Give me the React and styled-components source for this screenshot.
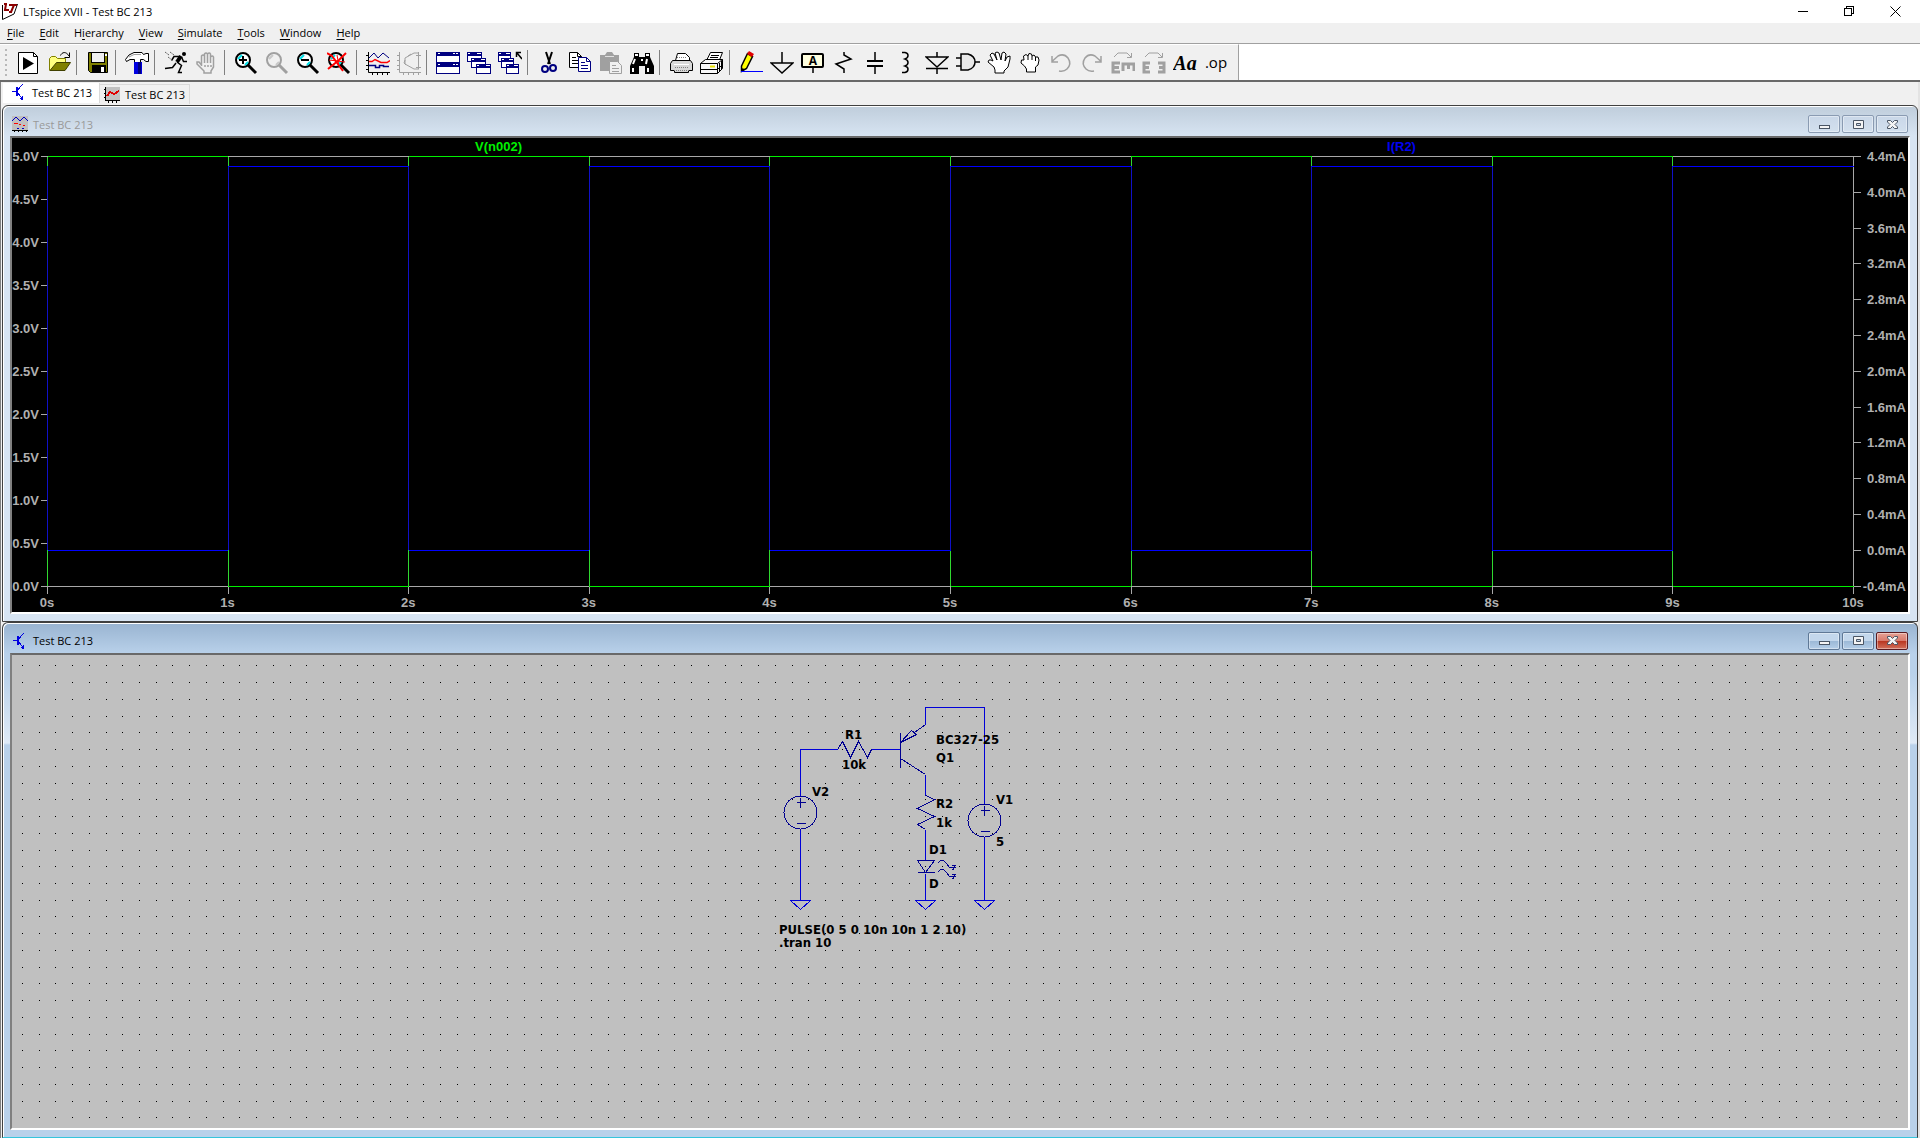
import React, { useState } from "react";
import styled, { createGlobalStyle, css } from "styled-components";

const GlobalStyle = createGlobalStyle`
  * {
    box-sizing: border-box;
  }
  body {
    margin: 0;
    background: #f0f0f0;
    color: #000;
    font-family: "Open Sans", "Noto Sans", sans-serif;
    font-size: 11px;
  }
  button {
    margin: 0;
    padding: 0;
    border: 0;
    background: none;
    color: inherit;
    font: inherit;
  }
`;

const NAVY = "#000080";
const GREY = "#a0a0a0";

const menus = ["File", "Edit", "Hierarchy", "View", "Simulate", "Tools", "Window", "Help"];
const menuKeys = { Hierarchy: 1 };

const Magnifier = ({ color = "#000", glass = "#fff", shine = "#00e0e8", children }) => (
  <>
    <path d="M14 14L22 22" stroke={color} strokeWidth="3" />
    <circle cx="9" cy="9" r="7" fill={glass} stroke={color} strokeWidth="2" />
    <path d="M4 8L8 4M11 14L14 11" stroke={shine} strokeWidth="2" />
    {children}
  </>
);

const MiniWindow = ({ x, y, w = 14, h = 9 }) => (
  <g>
    <rect x={x} y={y} width={w} height={h} fill={NAVY} />
    <rect x={x + 1} y={y + 4} width={w - 2} height={h - 5} fill="#fff" />
    <rect x={x + w - 5} y={y + 1} width="4" height="1" fill="#fff" />
    <rect x={x + 1} y={y + 1} width="2" height="1" fill="#fff" />
  </g>
);

const icons = {
  run: (
    <>
      <path d="M2.5 1.5H17.5L21.5 5.5V22.5H2.5Z" fill="#fff" stroke="#000" />
      <path d="M17.5 1.5V5.5H21.5" fill="none" stroke="#000" />
      <path d="M7 6L18 12.5L7 19Z" />
    </>
  ),
  open: (
    <>
      <path d="M2.5 19.5V7.5L4.5 5.5H8.5L10.5 7.5H18.5V12" fill="#ffff80" stroke="#808000" />
      <path d="M3 19.5L9.5 11.5H23.5L18 19.5Z" fill="#808000" stroke="#404000" />
      <path d="M13.5 4.5C15 1 19 0 22 5M22.5 1.5V6.5H17.5" fill="none" stroke="#000" />
    </>
  ),
  save: (
    <>
      <path d="M2.5 1.5H21.5V21.5H4.5L2.5 19.5Z" fill="#808000" stroke="#000" />
      <rect x="5.5" y="1.5" width="13" height="10" fill="#f0f0f0" stroke="#000" />
      <rect x="19" y="3" width="2" height="2" fill="#fff" />
      <rect x="6" y="14" width="14" height="8" />
      <rect x="15" y="16" width="3" height="5" fill="#fff" />
    </>
  ),
  hammer: (
    <>
      <path
        d="M9.5 11.5V8.5H5L1.5 10.5L0.5 8.5L4 4L9 1.5H17L18.5 3.5L21 2.5H23.5V10.5H21L18.5 8.5H15.5V11.5Z"
        fill="#fff"
        stroke="#000"
      />
      <path d="M4 6L9 3.5H16" fill="none" stroke={GREY} />
      <rect x="9" y="11" width="8" height="12" fill="#0000e0" />
      <rect x="13" y="11" width="3" height="12" fill={NAVY} />
    </>
  ),
  runner: (
    <g fill="none" stroke="#000">
      <circle cx="20" cy="3" r="2" fill="#000" stroke="none" />
      <path d="M17 5L13 11" strokeWidth="4" />
      <path d="M17.5 6L19.5 10.5H23M15 5.5H10L7.5 9.5M13 11L17.5 14.5L14.5 21.5H18M12 12L8.5 16.5L1 17.5" strokeWidth="1.5" />
      <path d="M1 1L5 4M6 1L10 4M4 6L8 9" stroke="#606060" strokeDasharray="2 1" />
    </g>
  ),
  halt: (
    <g fill="none" stroke={GREY} strokeWidth="1.5">
      <path d="M6.5 15V5Q8 3 9.5 5V12V3Q11 1 12.5 3V12V3Q14.5 1 15.5 3V12V6Q17.5 4 18.5 6V16L16 20V22H9V20L6 17L2 13V11H4L6.5 14" />
      <path d="M10 14V16M13 14V16M16 14V16" />
    </g>
  ),
  zoomIn: (
    <Magnifier>
      <path d="M9 5V13M5 9H13" stroke="#000" strokeWidth="2" />
    </Magnifier>
  ),
  zoomPan: <Magnifier color={GREY} glass="#f0f0f0" shine="#c8c8c8" />,
  zoomOut: (
    <Magnifier>
      <path d="M5 9H13" stroke="#000" strokeWidth="2" />
    </Magnifier>
  ),
  zoomFit: (
    <Magnifier>
      <path d="M0 2L5 5L16 20M19 2L12 9L1 18" fill="none" stroke="#f00" strokeWidth="2" />
      <path d="M2 9L18 11M10 4L12 15" stroke="#f00" />
    </Magnifier>
  ),
  plot: (
    <g fill="none" stroke="#000">
      <path d="M2.5 1V21.5H24M0 4.5H2M0 9.5H2M0 14.5H2M0 18.5H2M6.5 21V24M11.5 21V24M16.5 21V24M21.5 21V24" />
      <path d="M3 7L8 2L12 7L17 2L23 7" stroke={NAVY} />
      <path d="M3 10.5H6L9 8.5L15 11.5H21L24 9.5" stroke="#f00" strokeWidth="1.5" />
      <path d="M3 14.5H9.5V16.5H13.5V14.5H17.5V15.5H23" stroke={NAVY} strokeWidth="1.5" />
    </g>
  ),
  polar: (
    <g fill="none" stroke={GREY}>
      <path d="M2.5 1V21.5H24M0 4.5H2M0 9.5H2M0 14.5H2M0 18.5H2M6.5 21V24M11.5 21V24M16.5 21V24M21.5 21V24" />
      <path d="M21.5 1V18M19 4.5H24M19 16.5H24M22 2H17L8 7V13L17 18H22M14 3L11 5M8 9L7 12L9 14" />
    </g>
  ),
  tile: (
    <>
      <rect y="1" width="24" height="22" fill={NAVY} />
      <rect x="1" y="5" width="22" height="6" fill="#fff" />
      <rect x="1" y="16" width="22" height="6" fill="#fff" />
      <path d="M2 2.5H4M17 2.5H19M20 2.5H22M2 13.5H4M17 13.5H19M20 13.5H22" stroke="#fff" />
    </>
  ),
  cascade: (
    <>
      <MiniWindow x={0} y={1} w={15} h={10} />
      <MiniWindow x={4} y={7} w={15} h={10} />
      <MiniWindow x={9} y={13} w={15} h={10} />
    </>
  ),
  closeAll: (
    <>
      <MiniWindow x={0} y={1} w={13} h={10} />
      <MiniWindow x={3} y={7} w={13} h={10} />
      <MiniWindow x={8} y={13} w={13} h={10} />
      <path d="M18.5 6V1.5H23M19 2L24 8" fill="none" stroke="#000" strokeWidth="1.5" />
    </>
  ),
  cut: (
    <g fill="none">
      <path d="M9 1L13 13M15 1L11 13" stroke="#000" strokeWidth="2" />
      <circle cx="8" cy="18" r="3" stroke={NAVY} strokeWidth="2" />
      <circle cx="16" cy="17" r="3" stroke={NAVY} strokeWidth="2" />
    </g>
  ),
  copy: (
    <>
      <path d="M1.5 1.5H9.5L13.5 5.5V16.5H1.5Z" fill="#fff" stroke="#000" />
      <path d="M9.5 1.5V5.5H13.5M4 6.5H8M4 9.5H10M4 12.5H10" fill="none" stroke="#000" />
      <path d="M10.5 6.5H18.5L22.5 10.5V20.5H10.5Z" fill="#fff" stroke={NAVY} />
      <path d="M18.5 6.5V10.5H22.5M13 11.5H17M13 14.5H20M13 17.5H20" fill="none" stroke={NAVY} />
    </>
  ),
  paste: (
    <>
      <path d="M1 4H6L8 1H13L15 4H20V20H1Z" fill={GREY} />
      <path d="M6 5.5H15" stroke="#e0e0e0" />
      <path d="M10.5 10.5H18.5L22.5 14.5V22.5H10.5Z" fill="#f0f0f0" stroke={GREY} />
      <path d="M13 14.5H17M13 17.5H20M13 20.5H20" stroke={GREY} />
    </>
  ),
  find: (
    <>
      <path d="M4 2H9V6H15V2H20V6L24 15V23H15V15H9V23H0V15L4 6Z" />
      <path d="M5 4H8M16 4H19M5 8L3 13M17 8L16 13M3 17V21M18 17V21M12 8V10" stroke="#fff" strokeWidth="2" fill="none" />
    </>
  ),
  setup: (
    <>
      <path d="M6.5 9.5L8.5 2.5H16.5L20.5 6.5V9.5" fill="#fff" stroke="#000" />
      <path d="M3.5 9.5H21.5L23.5 12.5V19.5H19.5V21.5H5.5V19.5H1.5V12.5Z" fill="#d8d8d8" stroke="#000" />
      <path d="M8 6.5H17M6 16.5H20M5 19.5H20" stroke="#808080" strokeDasharray="1 1" />
      <path d="M5 13.5H20" stroke="#fff" />
    </>
  ),
  print: (
    <>
      <path d="M5.5 11.5L10.5 1.5H22.5L18.5 11.5" fill="#fff" stroke="#000" />
      <path d="M11 4.5H19M10 6.5H18M9 9.5H17" stroke="#000" />
      <path d="M0.5 12.5L5.5 8.5H22.5V17.5L17.5 22.5H0.5Z" fill="#f8f8f8" stroke="#000" />
      <path d="M0.5 12.5H17.5V22.5M17.5 12.5L22.5 8.5M0.5 18.5H17.5L22.5 13.5M19.5 12V20M21.5 10V18" fill="none" stroke="#000" />
      <path d="M10 15.5H15" stroke="#e8e000" strokeWidth="2" />
    </>
  ),
  wire: (
    <>
      <path d="M2.5 15L8.5 2.5L13.5 5.5L7.5 17.5L2.5 20.5Z" fill="#ff0" stroke="#000" strokeWidth="1.5" />
      <path d="M8 3L10 0L15 3L13 6Z" fill="#e00000" />
      <path d="M2 17L6 18L2 21Z" />
      <path d="M2 20.5H24" stroke="#00f" />
    </>
  ),
  ground: (
    <path d="M12 1V12M1 12H23L12 22Z" fill="none" stroke="#000" strokeWidth="1.5" />
  ),
  label: (
    <>
      <rect x="1" y="3" width="21" height="13" rx="1" fill="#ffffe0" stroke="#000" strokeWidth="2" />
      <text x="12" y="14" fontSize="12" fontWeight="bold" textAnchor="middle">A</text>
      <path d="M12 17V22" stroke="#000" strokeWidth="1.5" />
    </>
  ),
  resistor: <path d="M12 1V4L19 8L4 13L12 18V22" fill="none" stroke="#000" strokeWidth="1.5" />,
  capacitor: (
    <>
      <path d="M12 1V9M12 16V23" stroke="#000" strokeWidth="1.5" />
      <path d="M4 10H20M4 15H20" stroke="#000" strokeWidth="2" />
    </>
  ),
  inductor: (
    <path d="M8 1.5H11Q14 2 14 4.5Q14 7 11 8Q14 9 14 11.5Q14 14 11 15Q14 16 14 18Q14 21 11 21.5H8" fill="none" stroke="#000" strokeWidth="1.5" />
  ),
  diode: (
    <g fill="none" stroke="#000" strokeWidth="1.5">
      <path d="M12 1V6M12 17V23M1 17.5H23" />
      <path d="M1 6H23L12 16Z" />
    </g>
  ),
  gate: (
    <g fill="none" stroke="#000" strokeWidth="1.5">
      <path d="M5 3H12Q19 5 19 11Q19 17 12 19H5Z" fill="#e8e8e8" />
      <path d="M0 7H5M0 15H5M19 11H24" />
    </g>
  ),
  move: (
    <path
      d="M7 16L1 11L2 9H4L6 10L3 4L5 2L7 3L10 9L8 2L10 1L12 2L14 9L15 2L17 1L19 3L18 10L20 6L23 5V8L21 16L17 20V22H8V19Z"
      fill="#fff"
      stroke="#000"
    />
  ),
  drag: (
    <path
      d="M6.5 15L3 12L3.5 9H6L5.5 5L8 3.5L10 5L11 2.5L13.5 3L14 5L16 4L17.5 6L20 6L21 9L20 14L17.5 16V21H8.5V18Z M10 5V9M14 5V9M17.5 6V10"
      fill="#fff"
      stroke="#000"
    />
  ),
  undo: (
    <path d="M3 5V11H9M3.5 10L9 5Q15 2 19 7Q23 13 18 18Q15 21 10 20" fill="none" stroke={GREY} strokeWidth="1.5" />
  ),
  redo: (
    <path d="M21 5V11H15M20.5 10L15 5Q9 2 5 7Q1 13 6 18Q9 21 14 20" fill="none" stroke={GREY} strokeWidth="1.5" />
  ),
  rotate: (
    <g fill="none" stroke={GREY}>
      <path d="M3 6L7 2H16L20 6M20.5 2V6.5H16" />
      <path d="M9 12H2V21H9M3 16.5H8M12 20V13H23V20M17.5 13V18" strokeWidth="3" />
    </g>
  ),
  mirror: (
    <g fill="none" stroke={GREY}>
      <path d="M3 6L7 2H16L20 6M20.5 2V6.5H16" />
      <path d="M8 12H2V21H8M2 16.5H7M16 12H22V21H16M17 16.5H22" strokeWidth="3" />
    </g>
  ),
  text: (
    <text x="12" y="19" fontFamily="Liberation Serif, serif" fontSize="20" fontWeight="bold" fontStyle="italic" textAnchor="middle">
      Aa
    </text>
  ),
  directive: (
    <text x="12" y="17" fontSize="15" fontWeight="500" textAnchor="middle">
      .op
    </text>
  ),
};

const toolGroups = [
  ["run", "open"],
  ["save"],
  ["hammer"],
  ["runner", "halt"],
  ["zoomIn", "zoomPan", "zoomOut", "zoomFit"],
  ["plot", "polar"],
  ["tile", "cascade", "closeAll"],
  ["cut", "copy", "paste", "find"],
  ["setup", "print"],
  [
    "wire", "ground", "label", "resistor", "capacitor", "inductor", "diode", "gate",
    "move", "drag", "undo", "redo", "rotate", "mirror", "text", "directive",
  ],
];

const disabledTools = ["halt", "zoomPan", "polar", "paste", "undo", "redo", "rotate", "mirror"];

function AppLogo() {
  return (
    <svg width="16" height="17" viewBox="0 0 16 17" aria-hidden="true">
      <path d="M0.5 2V16.5L12 11L15.5 1" fill="#fff" stroke="#000" />
      <path d="M4 1L3 7H7M5 1H2M7 2H15M12 2L9 9M7 9H10" fill="none" stroke="#8b0000" strokeWidth="2" />
    </svg>
  );
}

function SchematicIcon() {
  return (
    <svg width="16" height="16" viewBox="0 0 16 16" shapeRendering="crispEdges" aria-hidden="true">
      <g fill="none" stroke="#0000e0">
        <path d="M1 7.5H6" />
        <path d="M6 3V12" strokeWidth="2" />
        <path d="M6.5 6L12 0M6.5 9L12 15" />
      </g>
      <path d="M12 16V12L8 15Z" fill="#0000e0" />
    </svg>
  );
}

function TraceIcon() {
  return (
    <svg width="16" height="16" viewBox="0 0 16 16" shapeRendering="crispEdges" aria-hidden="true">
      <rect x="1" width="15" height="14" fill="#c0c0c0" />
      <path d="M1.5 0V13.5H16M0 2.5H1M0 6.5H1M0 10.5H1M4.5 14V16M8.5 14V16M12.5 14V16" stroke="#000" fill="none" />
      <path d="M3 9L6 5L10 7L15 4" fill="none" stroke="#e00000" strokeWidth="2" />
    </svg>
  );
}

function PlotIcon() {
  return (
    <svg width="16" height="16" viewBox="0 0 16 16" shapeRendering="crispEdges" aria-hidden="true">
      <rect width="16" height="14" fill="#c0c0c0" />
      <path d="M0 5L4 1L8 5L12 1L16 5" fill="none" stroke="#0000c0" />
      <path d="M2 7.5H6M7 8.5H9M11 9.5H13" stroke="#f00" />
      <path d="M5 12.5H7M10 12.5H12" stroke="#0000c0" />
      <path d="M0 14.5H16M2.5 15V16M6.5 15V16M10.5 15V16M14.5 15V16" stroke="#000" />
    </svg>
  );
}

const captionIcons = {
  minimize: <rect x="1.5" y="7.5" width="10" height="3" />,
  maximize: <path d="M1.5 2.5H11.5V10.5H1.5ZM4.5 5.5H8.5V7.5H4.5Z" fillRule="evenodd" />,
  close: <path d="M1.5 2.5H4.5L6.5 4.5L8.5 2.5H11.5V4L9 6.5L11.5 9V10.5H8.5L6.5 8.5L4.5 10.5H1.5V9L4 6.5L1.5 4Z" />,
};

function ChildWindow({ title, icon, active, children }) {
  return (
    <Frame $active={active}>
      <FrameTitle $active={active}>
        {icon}
        <span>{title}</span>
        <CaptionButtons>
          {Object.keys(captionIcons).map((name) => (
            <CaptionButton
              key={name}
              type="button"
              aria-label={name}
              $active={active}
              $danger={active && name === "close"}
            >
              <svg width="13" height="13" viewBox="0 0 13 13" aria-hidden="true">
                <g fill="#f4f4f4" stroke="#4a5564">{captionIcons[name]}</g>
              </svg>
            </CaptionButton>
          ))}
        </CaptionButtons>
      </FrameTitle>
      <Client>{children}</Client>
    </Frame>
  );
}

const seconds = Array.from({ length: 11 }, (_, i) => i);
const volts = Array.from({ length: 11 }, (_, i) => 5 - i * 0.5);
const currents = Array.from({ length: 13 }, (_, i) => 4.4 - i * 0.4);

const timeX = (s) => `${s * 10}%`;
const voltY = (v) => `${((5 - v) / 5) * 100}%`;
const ampY = (a) => `${((4.4 - a) / 4.8) * 100}%`;

const I_ON = 4.29;

function Waveform() {
  return (
    <PlotArea>
      <PlotSvg role="img" aria-label="V(n002) and I(R2) over time">
        <g transform="translate(0.5 0.5)" shapeRendering="crispEdges">
          <g stroke="#a8a8a8">
            <line x1="0" y1="0" x2="100%" y2="0" />
            <line x1="0" y1="100%" x2="100%" y2="100%" />
            <line x1="0" y1="0" x2="0" y2="100%" />
            <line x1="100%" y1="0" x2="100%" y2="100%" />
            {volts.map((v) => (
              <line key={v} x1="-7" x2="0" y1={voltY(v)} y2={voltY(v)} />
            ))}
          </g>
          {seconds.slice(0, 10).map((s) => {
            const on = s % 2 === 0;
            return (
              <g key={s}>
                <line x1={timeX(s)} x2={timeX(s)} y1="0" y2="100%" stroke="#30d830" />
                <line
                  x1={timeX(s)}
                  x2={timeX(s + 1)}
                  y1={voltY(on ? 5 : 0)}
                  y2={voltY(on ? 5 : 0)}
                  stroke="#00f000"
                />
              </g>
            );
          })}
          {seconds.slice(0, 10).map((s) => {
            const level = ampY(s % 2 === 0 ? 0 : I_ON);
            return (
              <g key={s}>
                <line x1={timeX(s)} x2={timeX(s)} y1={ampY(I_ON)} y2={ampY(0)} stroke="#1010c8" />
                <line x1={timeX(s)} x2={timeX(s + 1)} y1={level} y2={level} stroke="#0000ff" />
              </g>
            );
          })}
        </g>
        {/* ticks that hang off the right and bottom axes */}
        {currents.map((a) => (
          <svg key={a} x="100%" y={ampY(a)} overflow="visible">
            <path d="M1 0.5H8" stroke="#a8a8a8" shapeRendering="crispEdges" />
            <AxisText x="53" y="5" textAnchor="end">{`${a.toFixed(1)}mA`.replace("-0.0", "0.0")}</AxisText>
          </svg>
        ))}
        {seconds.map((s) => (
          <svg key={s} x={timeX(s)} y="100%" overflow="visible">
            <path d="M0.5 1V8" stroke="#a8a8a8" shapeRendering="crispEdges" />
            <AxisText x="0" y="21" textAnchor="middle">{s}s</AxisText>
          </svg>
        ))}
        {volts.map((v) => (
          <svg key={v} x="0" y={voltY(v)} overflow="visible">
            <AxisText x="-8" y="5" textAnchor="end">{v.toFixed(1)}V</AxisText>
          </svg>
        ))}
        <AxisText x="25%" y="-5" textAnchor="middle" $color="#00f000">V(n002)</AxisText>
        <AxisText x="75%" y="-5" textAnchor="middle" $color="#0000f0">I(R2)</AxisText>
      </PlotSvg>
    </PlotArea>
  );
}

// the grid pitch is not a whole number of pixels, 15 dots fill a 251px tile
const gridSteps = Array.from({ length: 15 }, (_, k) => k * 16.73);

const parts = [
  [833, 84, "R1"],
  [830, 114, "10k"],
  [924, 89, "BC327-25"],
  [924, 107, "Q1"],
  [800, 141, "V2"],
  [924, 153, "R2"],
  [924, 172, "1k"],
  [984, 149, "V1"],
  [984, 191, "5"],
  [917, 199, "D1"],
  [917, 233, "D"],
  [767, 279, "PULSE(0 5 0 10n 10n 1 2 10)"],
  [767, 292, ".tran 10"],
];

const Source = ({ x, y }) => (
  <>
    <circle cx={x} cy={y} r="16.5" />
    <path d={`M${x - 4} ${y - 10}H${x + 5}M${x} ${y - 15}V${y - 5}M${x - 4} ${y + 11}H${x + 5}`} />
  </>
);

const Ground = ({ x, y }) => <path d={`M${x - 10} ${y}H${x + 10}L${x} ${y + 9}Z`} />;

function Schematic() {
  return (
    <Canvas>
      <SchematicSvg role="img" aria-label="Transistor switch schematic">
        <defs>
          <pattern id="grid" x="10" y="10" width="251" height="251" patternUnits="userSpaceOnUse">
            {gridSteps.map((gx) =>
              gridSteps.map((gy) => (
                <rect key={`${gx}-${gy}`} x={Math.floor(gx + 0.4)} y={Math.ceil(gy)} width="1" height="1" />
              ))
            )}
          </pattern>
        </defs>
        <rect width="100%" height="100%" fill="url(#grid)" />
        <g transform="translate(0.5 0.5)" fill="none" shapeRendering="crispEdges">
          <g stroke="#0000d8">
            <path d="M788 140V94H825M859 94H888" />
            <path d="M788 174V245M972 182V245M913 218V245" />
            <path d="M913 69V52H972V148" />
            <path d="M913 119V140M913 174V205" />
            <Ground x={788} y={245} />
            <Ground x={913} y={245} />
            <Ground x={972} y={245} />
          </g>
          <g stroke="#000090">
            <path d="M825 94L830 86L838 102L846 86L855 102L859 94" />
            <path d="M888 77V112M913 69L902 77M888 87L899 75L904 79L888 87M888 103L913 119" />
            <path d="M913 140L922 144L905 153L922 161L905 169L913 174" />
            <path d="M905 205H922L913 217ZM905 217H922" />
            <path d="M925 208L928 205H931L934 208L937 212H943M939 210H943L940 215" />
            <path d="M925 217L928 214H931L934 217L937 221H943M939 219H943L940 224" />
            <Source x={788} y={157} />
            <Source x={972} y={165} />
          </g>
        </g>
        {parts.map(([x, y, label]) => (
          <PartText key={label} x={x} y={y}>{label}</PartText>
        ))}
      </SchematicSvg>
    </Canvas>
  );
}

export default function App() {
  const [tab, setTab] = useState(0);

  return (
    <>
      <GlobalStyle />
      <Shell>
        <TitleBar>
          <AppLogo />
          <span>LTspice XVII - Test BC 213</span>
          <SystemButtons>
            <SystemButton type="button" aria-label="Minimize">
              <svg width="11" height="11" shapeRendering="crispEdges"><path d="M0 5.5H10" stroke="#000" /></svg>
            </SystemButton>
            <SystemButton type="button" aria-label="Restore">
              <svg width="11" height="11" shapeRendering="crispEdges">
                <path d="M0.5 2.5H7.5V9.5H0.5ZM2.5 2V0.5H9.5V7.5H8" fill="none" stroke="#000" />
              </svg>
            </SystemButton>
            <SystemButton type="button" aria-label="Close">
              <svg width="11" height="11"><path d="M0.5 0.5L10.5 10.5M10.5 0.5L0.5 10.5" stroke="#000" /></svg>
            </SystemButton>
          </SystemButtons>
        </TitleBar>
        <MenuBar>
          {menus.map((name) => {
            const at = menuKeys[name] || 0;
            return (
              <button key={name} type="button">
                {name.slice(0, at)}
                <u>{name[at]}</u>
                {name.slice(at + 1)}
              </button>
            );
          })}
        </MenuBar>
        <ToolRow>
          <Toolbar>
            <Grip />
            {toolGroups.map((group) => (
              <ToolGroup key={group[0]}>
                {group.map((name) => (
                  <ToolButton key={name} type="button" aria-label={name} disabled={disabledTools.includes(name)}>
                    <svg width="24" height="24" viewBox="0 0 24 24" aria-hidden="true">{icons[name]}</svg>
                  </ToolButton>
                ))}
              </ToolGroup>
            ))}
          </Toolbar>
        </ToolRow>
        <Workspace>
          <Tabs role="tablist">
            <Tab type="button" role="tab" aria-selected={tab === 0} $selected={tab === 0} onClick={() => setTab(0)}>
              <SchematicIcon />
              Test BC 213
            </Tab>
            <Tab type="button" role="tab" aria-selected={tab === 1} $selected={tab === 1} onClick={() => setTab(1)}>
              <TraceIcon />
              Test BC 213
            </Tab>
          </Tabs>
          <ChildWindow title="Test BC 213" icon={<PlotIcon />}>
            <Waveform />
          </ChildWindow>
          <ChildWindow title="Test BC 213" icon={<SchematicIcon />} active>
            <Schematic />
          </ChildWindow>
        </Workspace>
      </Shell>
    </>
  );
}

const Shell = styled.div`
  display: flex;
  flex-direction: column;
  min-height: 100vh;
`;

const TitleBar = styled.header`
  display: flex;
  align-items: center;
  gap: 5px;
  height: 23px;
  padding-left: 2px;
  background: #fff;
`;

const SystemButtons = styled.div`
  display: flex;
  margin-left: auto;
  padding-right: 2px;
`;

const SystemButton = styled.button`
  display: flex;
  align-items: center;
  justify-content: center;
  width: 46px;
  height: 20px;
`;

const MenuBar = styled.nav`
  display: flex;
  align-items: center;
  gap: 15px;
  height: 20px;
  padding: 0 0 2px 7px;
  u {
    text-underline-offset: 2px;
  }
`;

const ToolRow = styled.div`
  display: flex;
  height: 39px;
  border-top: 1px solid #a0a0a0;
  border-bottom: 2px solid #696969;
  background: #fff;
`;

const Toolbar = styled.div`
  display: flex;
  align-items: center;
  padding-right: 7px;
  padding-left: 5px;
  border-top: 1px solid #fff;
  border-right: 1px solid #a0a0a0;
  background: #f0f0f0;
`;

const Grip = styled.div`
  width: 2px;
  height: 28px;
  margin-right: 5px;
  background: repeating-linear-gradient(#b8b8b8 0 2px, #f0f0f0 2px 5px);
`;

const ToolGroup = styled.div`
  display: flex;
  align-items: center;
  & + &::before {
    content: "";
    width: 1px;
    height: 25px;
    margin: 0 5px 0 2px;
    background: #808080;
  }
`;

const ToolButton = styled.button`
  display: flex;
  align-items: center;
  justify-content: center;
  width: 31px;
  height: 32px;
`;

const Workspace = styled.main`
  display: grid;
  flex: 1;
  grid-template-rows: auto 1fr 1fr;
  padding-left: 1px;
  border-right: 2px solid #e3e3e3;
  border-left: 1px solid #808080;
`;

const Tabs = styled.div`
  display: flex;
  align-items: flex-start;
  height: 23px;
  padding: 1px 0 0 1px;
`;

const Tab = styled.button`
  display: flex;
  align-items: center;
  gap: 5px;
  height: 20px;
  padding: 0 4px;
  border-right: 1px solid #d9d9d9;
  ${({ $selected }) =>
    $selected
      ? css`
          padding: 0 7px 2px 8px;
          background: #fff;
        `
      : css`
          margin-top: 1px;
          border-top: 1px solid #d9d9d9;
        `}
  svg {
    flex: none;
  }
`;

const Frame = styled.section`
  display: flex;
  flex-direction: column;
  padding: 0 7px 7px;
  border: 1px solid #404040;
  border-radius: 6px 6px 0 0;
  background: linear-gradient(#bfcddb, #d7e4f2 30px);
  box-shadow: inset 1px 1px #fff;
  ${({ $active }) =>
    $active &&
    css`
      border-bottom-color: #35c5dc;
      background: linear-gradient(#99b4d1, #b9d1ea 31px, #b9d1ea 50px, #dfeaf6 120px, #b9d1ea 122px);
    `}
`;

const FrameTitle = styled.div`
  display: flex;
  align-items: center;
  gap: 5px;
  height: 30px;
  padding: 6px 2px 0;
  color: ${({ $active }) => ($active ? "#000" : "#999")};
`;

const CaptionButtons = styled.div`
  display: flex;
  gap: 2px;
  margin-left: auto;
`;

const CaptionButton = styled.button`
  display: flex;
  align-items: center;
  justify-content: center;
  width: 32px;
  height: 18px;
  border: 1px solid ${({ $active }) => ($active ? "#5f7896" : "#8a9bb2")};
  border-radius: 2px;
  background: ${({ $active }) =>
    $active ? "linear-gradient(#c3d7ec 50%, #9bb8d6 50%, #b5cee8)" : "linear-gradient(#c9d7e8, #d3e0ee)"};
  box-shadow: inset 0 0 0 1px rgba(255, 255, 255, 0.4);
  ${({ $danger }) =>
    $danger &&
    css`
      border-color: #5a1a20;
      background: linear-gradient(#e6a195, #d8786a 50%, #b8341f 50%, #d2705c);
    `}
`;

const Client = styled.div`
  display: flex;
  flex: 1;
  border: 2px solid #fff;
  border-top-color: #696969;
  border-left-color: #808080;
`;

const PlotArea = styled.div`
  display: flex;
  flex: 1;
  min-height: 240px;
  padding: 18px 55px 26px 35px;
  background: #000;
`;

const PlotSvg = styled.svg`
  flex: 1;
  height: auto;
  overflow: visible;
`;

const AxisText = styled.text`
  fill: ${({ $color }) => $color || "#b0b0b0"};
  font-family: "Liberation Sans", Arial, sans-serif;
  font-size: 13px;
  font-weight: bold;
`;

const Canvas = styled.div`
  display: flex;
  flex: 1;
  min-height: 320px;
  background: #c0c0c0;
`;

const SchematicSvg = styled.svg`
  flex: 1;
  height: auto;
`;

const PartText = styled.text`
  fill: #000;
  font-family: "DejaVu Sans Condensed", "DejaVu Sans", sans-serif;
  font-size: 13px;
  font-weight: bold;
`;
